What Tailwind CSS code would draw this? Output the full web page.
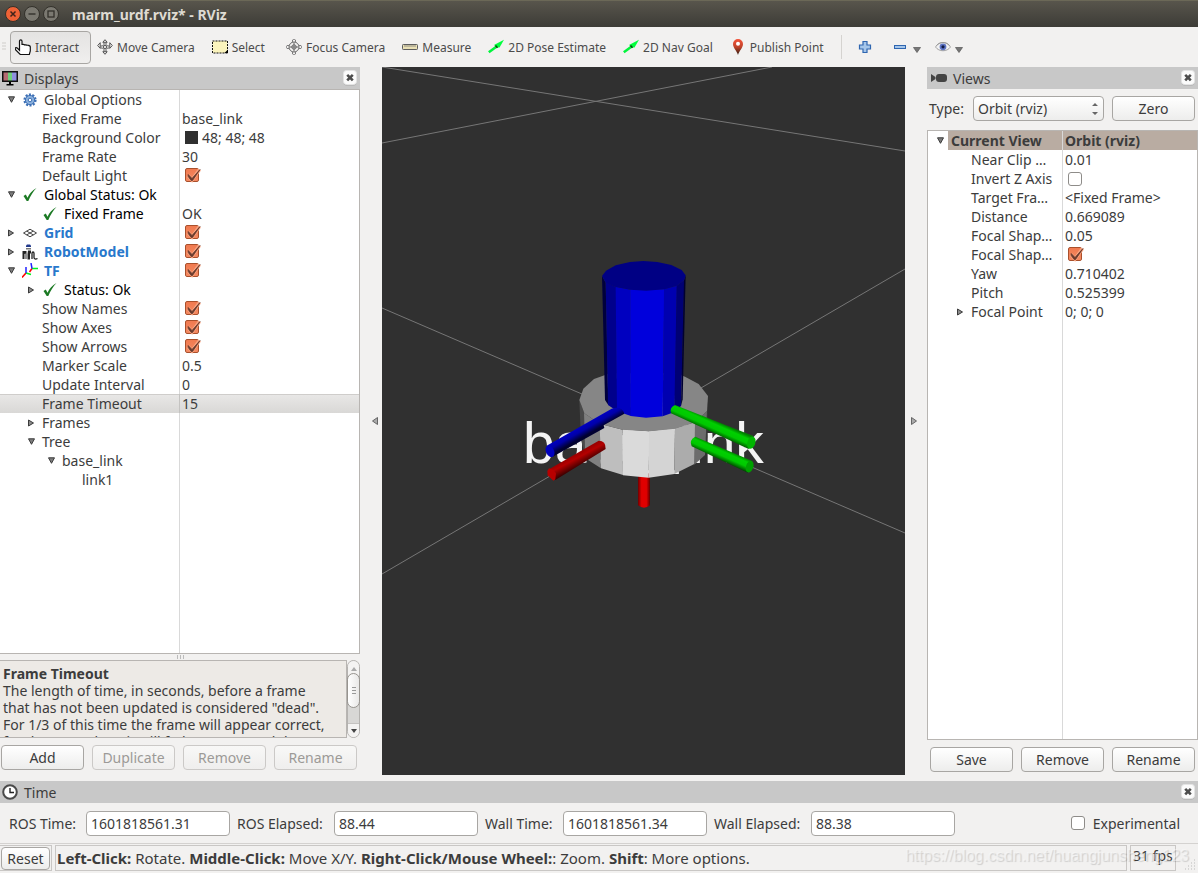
<!DOCTYPE html>
<html lang="en">
<head>
<meta charset="utf-8">
<title>marm_urdf.rviz* - RViz</title>
<script src="https://cdn.jsdelivr.net/npm/@tailwindcss/browser@4"></script>
</head>
<body class="flex h-screen flex-col overflow-hidden bg-[#f2f1f0] font-['Noto_Sans','Open_Sans',sans-serif] text-[14px] leading-[19px] text-[#3c3c3c]">

<!-- shared icons -->
<svg class="hidden" aria-hidden="true">
  <symbol id="down" viewBox="0 0 8 8"><path d="M1.500.8h6L4.500 6.300z" fill="#7c7c7c" stroke="#3a3a3a"/></symbol>
  <symbol id="right" viewBox="0 0 8 8"><path d="M1.500 1v6l5-3z" fill="#8c8c8c" stroke="#3a3a3a"/></symbol>
  <symbol id="ok" viewBox="0 0 14 14"><path d="M.5 8 2.800 6.500 4.500 9.700C6.500 5.500 9 2.500 13.500 0 10 3.500 7.500 8 5.300 13H3.700z" fill="#1c7a24"/></symbol>
  <symbol id="tick" viewBox="0 0 16 16"><path d="M3 7.500 7 12 14.500 1.500" fill="none" stroke="#f9a582" stroke-width="3.500"/><path d="M3.200 6.500 7 10.500 15 1.500 7.500 12.500H6.200L3.200 8.500z" fill="#693a2c" stroke="#693a2c" stroke-width=".8"/></symbol>
  <symbol id="close" viewBox="0 0 14 16"><rect x=".5" y="1.500" width="13" height="14" rx="3" fill="#aaa"/><rect x=".5" y=".5" width="13" height="14" rx="3" fill="#fbfbfb" stroke="#e4e4e4"/><path d="M4.200 4.800l5.600 5.600M9.800 4.800l-5.600 5.600" stroke="#4c4c4c" stroke-width="2.600"/></symbol>
  <symbol id="pose" viewBox="0 0 16 16"><path d="M.8 13.200 9 7.200" stroke="#00f53c" stroke-width="2.600"/><path d="M6 6 16 .8 11.500 8.500 9 8.500z" fill="#00ff3c"/><path d="m7.500 6.500 2 2.200" stroke="#064c12" stroke-width="1.600"/></symbol>
</svg>

<header class="flex h-[27px] shrink-0 items-center gap-[3px] border-t border-[#6b6857] bg-linear-to-b from-[#58554c] to-[#3d3c37] pl-[5px]">
  <button aria-label="Close" class="size-4"><svg viewBox="0 0 16 16"><circle cx="8" cy="8" r="7.500" fill="#ee6236" stroke="#33312b"/><path d="m5.500 5.500 5 5m0-5-5 5" stroke="#40231a" stroke-width="1.500"/></svg></button>
  <button aria-label="Minimize" class="size-4"><svg viewBox="0 0 16 16"><circle cx="8" cy="8" r="7.500" fill="#7b7971" stroke="#33312b"/><path d="M4.500 8h7" stroke="#33312b" stroke-width="1.400"/></svg></button>
  <button aria-label="Maximize" class="size-4"><svg viewBox="0 0 16 16"><circle cx="8" cy="8" r="7.500" fill="#7b7971" stroke="#33312b"/><rect x="5" y="5" width="6" height="6" fill="none" stroke="#33312b" stroke-width="1.300"/></svg></button>
  <h1 class="pl-[10px] text-[14px] font-bold text-[#dfdbd2]">marm_urdf.rviz* - RViz</h1>
</header>

<nav aria-label="Tools" class="flex h-10 shrink-0 items-center text-[12px] text-[#4c4c4c]">
  <svg class="mx-[2px] h-3 w-1.5" viewBox="0 0 6 12"><path d="M0 2h4M0 5h4M0 8h4" stroke="#cfcdca"/></svg>
  <button class="flex h-[33px] w-[81px] items-center gap-1 rounded border border-[#a8a6a3] bg-linear-to-b from-[#e4e3e2] to-[#f0efee] pl-1 whitespace-nowrap">
    <svg class="size-4 shrink-0" viewBox="0 0 16 16"><path d="M4.500 8V2.200C4.500.3 7 .3 7 2.200V6c0-1 2.700-1 2.700.4 0-1 2.600-.9 2.600.4 0-.8 3-.6 3 1V12l-1 3.500h-9L.7 11C-.5 8.800 1 8 2.500 9.300l2 2z" fill="#fff" stroke="#111" stroke-width="1.200"/></svg>Interact</button>
  <button class="flex items-center gap-1 pl-[6px] whitespace-nowrap">
    <svg class="size-4 shrink-0" viewBox="0 0 16 16" fill="none" stroke="#555"><path d="M8 .7 5.800 3.300H10.200zM8 15.300l-2.200-2.600h4.400zM.7 6.500l2.500-2.800v5.600zM15.300 6.500l-2.500-2.800v5.600zM7 3.500v2L5.500 7H3.500M9 3.500v2L10.500 7h2M7 12.500v-2L5.500 9h-2M9 12.500v-2L10.500 9h2"/><circle cx="8" cy="8" r="1.600"/></svg>Move Camera</button>
  <button class="ml-[17px] flex items-center gap-1">
    <svg class="size-4 shrink-0" viewBox="0 0 16 16"><rect x=".5" y="2" width="15" height="12" fill="#fbf4bd" stroke="#111" stroke-dasharray="2 1"/><path d="M12.500 14H16v-3.500z"/></svg>Select</button>
  <button class="ml-[21px] flex items-center gap-1 whitespace-nowrap">
    <svg class="size-4 shrink-0" viewBox="0 0 16 16" fill="none" stroke="#666"><circle cx="8" cy="8" r="5"/><circle cx="8" cy="8" r="2.200"/><path d="M8 3.500v9M3.500 8h9"/><path d="M6.500 3V1L8 0l1.500 1v2M6.500 13v2L8 16l1.500-1v-2M3 6.500H1L0 8l1 1.500h2M13 6.500h2L16 8l-1 1.500h-2" stroke-width=".8"/></svg>Focus Camera</button>
  <button class="ml-[17px] flex items-center gap-1">
    <svg class="size-4 shrink-0" viewBox="0 0 16 16"><rect x=".5" y="5.500" width="15" height="5" rx=".8" fill="#e9e0b4" stroke="#5c5c5c"/><path d="M3 6v2M5 6v2M7 6v2M9 6v2M11 6v2M13 6v2" stroke="#777" stroke-width=".8"/></svg>Measure</button>
  <button class="ml-[17px] flex items-center gap-1 whitespace-nowrap"><svg class="size-4 shrink-0"><use href="#pose"/></svg>2D Pose Estimate</button>
  <button class="ml-[17px] flex items-center gap-1 whitespace-nowrap"><svg class="size-4 shrink-0"><use href="#pose"/></svg>2D Nav Goal</button>
  <button class="ml-[17px] flex items-center gap-1 whitespace-nowrap">
    <svg class="size-4 shrink-0" viewBox="0 0 16 16"><defs><linearGradient id="pin" x2="0" y2="1"><stop stop-color="#f4543a"/><stop offset=".5" stop-color="#c0432a"/><stop offset="1" stop-color="#2c1a10"/></linearGradient></defs><path d="M8 16C7 12 3 9 3 5a5 5 0 0 1 10 0c0 4-4 7-5 11z" fill="url(#pin)"/><circle cx="8" cy="4.700" r="2" fill="#fff"/></svg>Publish Point</button>
  <span class="ml-[17px] h-6 w-px bg-[#d5d3d0]"></span>
  <button aria-label="Add tool" class="ml-[16px] size-[14px]"><svg viewBox="0 0 14 14"><path d="M5 1.500h4V5h3.500v4H9v3.500H5V9H1.500V5H5z" fill="#a5c6ea" stroke="#2f66b0" stroke-width="1.200"/></svg></button>
  <button aria-label="Remove tool" class="ml-[21px] flex items-center gap-[6px]"><svg class="size-[14px]" viewBox="0 0 14 14"><rect x="1.500" y="5.500" width="11" height="3" fill="#a5c6ea" stroke="#2f66b0"/></svg><svg class="mt-1.5 h-[6px] w-2" viewBox="0 0 8 6"><path d="M.5.5h7L4 5.500z" fill="#777" stroke="#555" stroke-width=".7"/></svg></button>
  <button aria-label="Tool names" class="ml-[14px] flex items-center gap-1"><svg class="size-4" viewBox="0 0 16 16"><path d="M.5 8C4 2 12 2 15.500 8 12 13 4 13 .5 8z" fill="#f2f2f2" stroke="#a4a4a4"/><path d="M1.500 6.500C5 2.500 11 2.500 14.500 6.500" fill="none" stroke="#999"/><circle cx="8" cy="7.800" r="3.400" fill="#5d74c4"/><circle cx="8" cy="7.800" r="1.600" fill="#111a44"/></svg><svg class="mt-1.5 h-[6px] w-2" viewBox="0 0 8 6"><path d="M.5.5h7L4 5.500z" fill="#777" stroke="#555" stroke-width=".7"/></svg></button>
</nav>

<main class="flex min-h-0 flex-1">
  <!-- Displays -->
  <section class="flex w-[360px] shrink-0 flex-col pb-[11px]">
    <div class="flex h-[22px] shrink-0 items-center bg-[#c8c8c8] px-[2px]">
      <svg class="size-4" viewBox="0 0 16 16"><rect x=".5" y="1.500" width="15" height="10" fill="#111" stroke="#111"/><path d="M1.500 2.500H6v8H1.500z" fill="#b56a72"/><path d="M6 2.500h4v8H6z" fill="#6fd07c"/><path d="M10 2.500h4.500v8H10z" fill="#8f8fe0"/><path d="M7 12h2v2h2.500v1.500h-7V14H7z"/></svg>
      <h2 class="flex-1 pl-[6px]">Displays</h2>
      <button aria-label="Close Displays" class="mr-px h-4 w-[14px]"><svg class="h-4 w-[14px]"><use href="#close"/></svg></button>
    </div>
    <div class="min-h-0 flex-1 border-y border-r border-[#b8b5b2] bg-white">
      <table class="h-full w-full table-fixed border-separate border-spacing-0 whitespace-nowrap">
        <colgroup><col class="w-[180px]"><col></colgroup>
        <tbody>
        <tr class="h-[19px]"><td class="border-r border-[#d9d9d9] p-0"><div class="flex items-center pl-[7px]"><svg class="mr-2 size-2"><use href="#down"/></svg><svg class="mr-[7px] size-[14px]" viewBox="0 0 14 14"><circle cx="7" cy="7" r="5.400" fill="none" stroke="#3c6fb5" stroke-width="2.400" stroke-dasharray="2 1.390"/><circle cx="7" cy="7" r="4.600" fill="#8ab0dc" stroke="#3c6fb5"/><circle cx="7" cy="7" r="1.800" fill="#fff" stroke="#3c6fb5"/></svg>Global Options</div></td><td class="p-0"></td></tr>
        <tr class="h-[19px]"><td class="border-r border-[#d9d9d9] p-0 pl-[42px]">Fixed Frame</td><td class="p-0 pl-[2px]">base_link</td></tr>
        <tr class="h-[19px]"><td class="border-r border-[#d9d9d9] p-0 pl-[42px]">Background Color</td><td class="p-0"><div class="flex items-center gap-1 pl-[5px]"><span class="size-[13px] bg-[#303030]"></span>48; 48; 48</div></td></tr>
        <tr class="h-[19px]"><td class="border-r border-[#d9d9d9] p-0 pl-[42px]">Frame Rate</td><td class="p-0 pl-[2px]">30</td></tr>
        <tr class="h-[19px]"><td class="border-r border-[#d9d9d9] p-0 pl-[42px]"><label for="c1">Default Light</label></td><td class="p-0"><div class="grid pl-[5px]"><input id="c1" type="checkbox" checked class="col-start-1 row-start-1 size-[14px] appearance-none rounded-[2px] border border-[#a9502c] bg-linear-to-b from-[#f07a50] to-[#f58a62]"><svg class="pointer-events-none col-start-1 row-start-1 size-4"><use href="#tick"/></svg></div></td></tr>
        <tr class="h-[19px] text-black"><td class="border-r border-[#d9d9d9] p-0"><div class="flex items-center pl-[7px]"><svg class="mr-2 size-2"><use href="#down"/></svg><svg class="mr-[7px] size-[14px]"><use href="#ok"/></svg>Global Status: Ok</div></td><td class="p-0"></td></tr>
        <tr class="h-[19px]"><td class="border-r border-[#d9d9d9] p-0 text-black"><div class="flex items-center pl-[43px]"><svg class="mr-[7px] size-[14px]"><use href="#ok"/></svg>Fixed Frame</div></td><td class="p-0 pl-[2px]">OK</td></tr>
        <tr class="h-[19px]"><td class="border-r border-[#d9d9d9] p-0"><div class="flex items-center pl-[7px]"><svg class="mr-2 size-2"><use href="#right"/></svg><svg class="mr-[7px] size-[14px]" viewBox="0 0 14 14" fill="none" stroke="#444"><path d="M.5 7 7 3.200 13.500 7 7 10.800zM3.700 5.100l6.600 3.800M10.300 5.100 3.700 8.900"/></svg><label for="c2" class="font-bold text-[#2878cc]">Grid</label></div></td><td class="p-0"><div class="grid pl-[5px]"><input id="c2" type="checkbox" checked class="col-start-1 row-start-1 size-[14px] appearance-none rounded-[2px] border border-[#a9502c] bg-linear-to-b from-[#f07a50] to-[#f58a62]"><svg class="pointer-events-none col-start-1 row-start-1 size-4"><use href="#tick"/></svg></div></td></tr>
        <tr class="h-[19px]"><td class="border-r border-[#d9d9d9] p-0"><div class="flex items-center pl-[7px]"><svg class="mr-[7px] size-2"><use href="#right"/></svg><svg class="mr-[6px] size-4" viewBox="0 0 16 16"><path d="M4 1.500 5 .5h3l1 1V3H4z" fill="#223a8c"/><path d="M4 4h5v1.500H4z" fill="#777"/><path d="M.5 7h4v8h-1V9.500l-1 .5v5h-2zM6 6.500h3V9l-1 1v5.500H5.500V10z" fill="#222"/><path d="M10 15V9.500c0-2 2-2 2 0v4c0 1.500 1.500 2 3.500 1" fill="none" stroke="#222" stroke-width="1.300"/></svg><label for="c3" class="font-bold text-[#2878cc]">RobotModel</label></div></td><td class="p-0"><div class="grid pl-[5px]"><input id="c3" type="checkbox" checked class="col-start-1 row-start-1 size-[14px] appearance-none rounded-[2px] border border-[#a9502c] bg-linear-to-b from-[#f07a50] to-[#f58a62]"><svg class="pointer-events-none col-start-1 row-start-1 size-4"><use href="#tick"/></svg></div></td></tr>
        <tr class="h-[19px]"><td class="border-r border-[#d9d9d9] p-0"><div class="flex items-center pl-[7px]"><svg class="mr-[7px] size-2"><use href="#down"/></svg><svg class="mr-[6px] size-4" viewBox="0 0 16 16" fill="none" stroke-width="1.500"><path d="M4 10 0 14.500M10 5.500 7.500 9" stroke="#f00"/><path d="M4 10l5 1.500M10 5.500h6" stroke="#0e2"/><path d="M4 10V4M10 5.500 9 0" stroke="#22f"/></svg><label for="c4" class="font-bold text-[#2878cc]">TF</label></div></td><td class="p-0"><div class="grid pl-[5px]"><input id="c4" type="checkbox" checked class="col-start-1 row-start-1 size-[14px] appearance-none rounded-[2px] border border-[#a9502c] bg-linear-to-b from-[#f07a50] to-[#f58a62]"><svg class="pointer-events-none col-start-1 row-start-1 size-4"><use href="#tick"/></svg></div></td></tr>
        <tr class="h-[19px] text-black"><td class="border-r border-[#d9d9d9] p-0"><div class="flex items-center pl-[27px]"><svg class="mr-2 size-2"><use href="#right"/></svg><svg class="mr-[7px] size-[14px]"><use href="#ok"/></svg>Status: Ok</div></td><td class="p-0"></td></tr>
        <tr class="h-[19px]"><td class="border-r border-[#d9d9d9] p-0 pl-[42px]"><label for="c5">Show Names</label></td><td class="p-0"><div class="grid pl-[5px]"><input id="c5" type="checkbox" checked class="col-start-1 row-start-1 size-[14px] appearance-none rounded-[2px] border border-[#a9502c] bg-linear-to-b from-[#f07a50] to-[#f58a62]"><svg class="pointer-events-none col-start-1 row-start-1 size-4"><use href="#tick"/></svg></div></td></tr>
        <tr class="h-[19px]"><td class="border-r border-[#d9d9d9] p-0 pl-[42px]"><label for="c6">Show Axes</label></td><td class="p-0"><div class="grid pl-[5px]"><input id="c6" type="checkbox" checked class="col-start-1 row-start-1 size-[14px] appearance-none rounded-[2px] border border-[#a9502c] bg-linear-to-b from-[#f07a50] to-[#f58a62]"><svg class="pointer-events-none col-start-1 row-start-1 size-4"><use href="#tick"/></svg></div></td></tr>
        <tr class="h-[19px]"><td class="border-r border-[#d9d9d9] p-0 pl-[42px]"><label for="c7">Show Arrows</label></td><td class="p-0"><div class="grid pl-[5px]"><input id="c7" type="checkbox" checked class="col-start-1 row-start-1 size-[14px] appearance-none rounded-[2px] border border-[#a9502c] bg-linear-to-b from-[#f07a50] to-[#f58a62]"><svg class="pointer-events-none col-start-1 row-start-1 size-4"><use href="#tick"/></svg></div></td></tr>
        <tr class="h-[19px]"><td class="border-r border-[#d9d9d9] p-0 pl-[42px]">Marker Scale</td><td class="p-0 pl-[2px]">0.5</td></tr>
        <tr class="h-[19px]"><td class="border-r border-[#d9d9d9] p-0 pl-[42px]">Update Interval</td><td class="p-0 pl-[2px]">0</td></tr>
        <tr class="h-[19px] bg-linear-to-b from-[#e9e8e7] to-[#d9d8d6] shadow-[inset_0_1px_0_#cfcdcb]"><td class="border-r border-[#c4c3c1] p-0 pl-[42px]">Frame Timeout</td><td class="p-0 pl-[2px]">15</td></tr>
        <tr class="h-[19px]"><td class="border-r border-[#d9d9d9] p-0"><div class="flex items-center pl-[27px]"><svg class="mr-[7px] size-2"><use href="#right"/></svg>Frames</div></td><td class="p-0"></td></tr>
        <tr class="h-[19px]"><td class="border-r border-[#d9d9d9] p-0"><div class="flex items-center pl-[27px]"><svg class="mr-[7px] size-2"><use href="#down"/></svg>Tree</div></td><td class="p-0"></td></tr>
        <tr class="h-[19px]"><td class="border-r border-[#d9d9d9] p-0"><div class="flex items-center pl-[47px]"><svg class="mr-[7px] size-2"><use href="#down"/></svg>base_link</div></td><td class="p-0"></td></tr>
        <tr class="h-[19px]"><td class="border-r border-[#d9d9d9] p-0 pl-[82px]">link1</td><td class="p-0"></td></tr>
        <tr><td class="border-r border-[#d9d9d9] p-0"></td><td class="p-0"></td></tr>
        </tbody>
      </table>
    </div>
    <div class="flex h-[6px] shrink-0 items-center justify-center gap-[2px]"><span class="h-1 w-px bg-[#bbb]"></span><span class="h-1 w-px bg-[#bbb]"></span><span class="h-1 w-px bg-[#bbb]"></span></div>
    <div class="flex h-[78px] shrink-0">
      <div id="help" class="min-w-0 flex-1 overflow-hidden border border-l-0 border-[#b8b5b2] bg-[#edeae6] pt-1 pl-[3px] leading-[17px] whitespace-nowrap">
        <h3 class="font-bold">Frame Timeout</h3>
        <p>The length of time, in seconds, before a frame<br>that has not been updated is considered "dead".<br>For 1/3 of this time the frame will appear correct,<br>for the second 1/3 it will fade to gray, and then</p>
      </div>
      <div role="scrollbar" aria-controls="help" aria-valuenow="0" class="flex w-[13px] flex-col items-center rounded-full border border-[#b4b2af] bg-[#d8d7d5]">
        <span class="flex h-4 w-full items-center justify-center rounded-t-full bg-[#f4f3f2]"><svg class="h-1 w-[6px]" viewBox="0 0 6 4"><path d="m0 4 3-4 3 4z" fill="#aaa"/></svg></span>
        <span class="-mx-px -mt-1 flex h-[35px] w-[13px] flex-col items-center justify-center gap-[2px] rounded-full border border-[#97948f] bg-linear-to-r from-white to-[#e9e8e7]"><i class="h-px w-1 bg-[#999]"></i><i class="h-px w-1 bg-[#999]"></i><i class="h-px w-1 bg-[#999]"></i></span>
        <span class="mt-auto flex h-[14px] w-full items-center justify-center rounded-b-full border-t border-[#c4c2c0] bg-[#f4f3f2]"><svg class="h-1 w-[6px]" viewBox="0 0 6 4"><path d="m0 0 3 4 3-4z" fill="#444"/></svg></span>
      </div>
    </div>
    <div class="mt-[7px] grid grid-cols-4 gap-2 pr-[3px] pl-px">
      <button class="h-[25px] rounded border border-[#a8a6a3] bg-linear-to-b from-white to-[#ededec]">Add</button>
      <button disabled class="h-[25px] rounded border border-[#cbc9c7] bg-linear-to-b from-[#f8f8f7] to-[#efeeed] text-[#9c9a97]">Duplicate</button>
      <button disabled class="h-[25px] rounded border border-[#cbc9c7] bg-linear-to-b from-[#f8f8f7] to-[#efeeed] text-[#9c9a97]">Remove</button>
      <button disabled class="h-[25px] rounded border border-[#cbc9c7] bg-linear-to-b from-[#f8f8f7] to-[#efeeed] text-[#9c9a97]">Rename</button>
    </div>
  </section>

  <button aria-label="Hide left dock" class="mb-1.5 flex w-[22px] shrink-0 items-center justify-end pr-1"><svg class="h-2 w-[6px]" viewBox="0 0 6 8"><path d="M5.500.5v7L.5 4z" fill="#aaa" stroke="#666"/></svg></button>

  <!-- 3D view -->
  <div class="mb-1.5 min-w-0 flex-1 bg-[#303030]">
    <svg class="h-full w-full" viewBox="382 67 523 708" preserveAspectRatio="xMidYMid slice" role="img" aria-label="Robot model">
      <defs>
        <linearGradient id="gb" gradientUnits="userSpaceOnUse" x1="233" y1="549" x2="255" y2="588"><stop stop-color="#000070"/><stop offset=".3" stop-color="#0000c0"/><stop offset=".6" stop-color="#0000a8"/><stop offset="1" stop-color="#000030"/></linearGradient>
        <linearGradient id="gr" gradientUnits="userSpaceOnUse" x1="222" y1="640" x2="242" y2="677"><stop stop-color="#900000"/><stop offset=".4" stop-color="#b40000"/><stop offset="1" stop-color="#3c0000"/></linearGradient>
        <linearGradient id="gg" gradientUnits="userSpaceOnUse" x1="648" y1="543" x2="632" y2="579"><stop stop-color="#008000"/><stop offset=".25" stop-color="#00d000"/><stop offset=".6" stop-color="#00c800"/><stop offset="1" stop-color="#004800"/></linearGradient>
        <linearGradient id="gg2" gradientUnits="userSpaceOnUse" x1="673" y1="626" x2="658" y2="660"><stop stop-color="#008000"/><stop offset=".25" stop-color="#00d000"/><stop offset=".6" stop-color="#00c800"/><stop offset="1" stop-color="#004800"/></linearGradient>
        <linearGradient id="gv"><stop stop-color="#700000"/><stop offset=".3" stop-color="#e00000"/><stop offset=".7" stop-color="#e00000"/><stop offset="1" stop-color="#600000"/></linearGradient>
      </defs>
      <path d="M382 67 905 151M382 143 772 67M382 308 905 533M382 574 905 269" stroke="#767676" fill="none"/>
      <text x="523" y="463" font-family="Liberation Sans, sans-serif" font-size="57" fill="#f4f4f4">base_link</text>
      <g transform="translate(500 240) scale(.33333)">
        <path d="M414 700h36v96q-18 14-36 0z" fill="url(#gv)"/>
        <path d="M238 480 253 520 258 655 243 600z" fill="#4a4a4a"/>
        <path d="M624 468 621 513 615 640 622 590z" fill="#3a3a3a"/>
        <path d="M252 519 300 552 303 685 256 655z" fill="#808080"/>
        <path d="M299 551 368 569 369 705 303 685z" fill="#bebebe"/>
        <path d="M368 568 448 574 446 713 369 706z" fill="#dadada"/>
        <path d="M447 573 525 565 523 702 446 713z" fill="#d4d4d4"/>
        <path d="M525 565 586 546 583 672 523 702z" fill="#acacac"/>
        <path d="M585 547 621 513 615 645 583 674z" fill="#6c6c6c"/>
        <path d="M238 480 250 446 282 417 330 400H530L555 410 596 432 624 468 621 513 585 547 525 566 448 574 368 569 300 552 253 520z" fill="#868686"/>
        <path d="M306 108 317 128 325 495 315 480z" fill="#00003c"/>
        <path d="M317 127 348 141 352 514 324 495z" fill="#00008c"/>
        <path d="M347 140 392 149 393 528 351 514z" fill="#0000c0"/>
        <path d="M391 148 493 148 488 529 438 533 392 528z" fill="#0000dc"/>
        <path d="M492 147 531 137 524 516 488 529z" fill="#0000b0"/>
        <path d="M530 137 553 120 543 498 523 516z" fill="#000074"/>
        <path d="M552 120 557 106 548 478 543 498z" fill="#000030"/>
        <path d="M306 108 318 92 347 76 390 66 430 63 472 66 514 75 545 90 557 106 553 120 531 137 493 148 439 152 391 149 347 141 317 128z" fill="#000084"/>
        <path d="M140 617 335 506Q365 496 373 521L311 556 313 564 158 650z" fill="url(#gb)"/>
        <ellipse cx="150" cy="634" rx="12" ry="18" transform="rotate(-28 150 634)" fill="#0000be"/>
        <path d="M147 688 296 602Q318 602 317 627L166 720z" fill="url(#gr)"/>
        <path d="M147 685 160 690 168 700 166 718 160 722 143 706 142 693z" fill="#b80000"/>
        <path d="M525 495 760 588 746 627 513 520Q508 502 525 495z" fill="url(#gg)"/>
        <ellipse cx="754" cy="608" rx="12" ry="19" transform="rotate(18 754 608)" fill="#00b400"/>
        <path d="M586 590 757 663 743 698 575 619Q566 600 586 590z" fill="url(#gg2)"/>
        <ellipse cx="749" cy="680" rx="11" ry="18" transform="rotate(18 749 680)" fill="#00a000"/>
      </g>
    </svg>
  </div>

  <button aria-label="Hide right dock" class="mb-1.5 flex w-[22px] shrink-0 items-center justify-start pl-1.5"><svg class="h-2 w-[6px]" viewBox="0 0 6 8"><path d="M.5.5v7l5-3.500z" fill="#aaa" stroke="#666"/></svg></button>

  <!-- Views -->
  <section class="flex w-[271px] shrink-0 flex-col pb-[9px]">
    <div class="flex h-[22px] shrink-0 items-center bg-[#c8c8c8] px-1">
      <svg class="size-4" viewBox="0 0 16 16"><path d="M0 4v8l4.500-3V7z" fill="#444"/><rect x="5" y="4" width="11" height="8" rx="3" fill="#444"/></svg>
      <h2 class="flex-1 pl-[6px]">Views</h2>
      <button aria-label="Close Views" class="-mr-px h-4 w-[14px]"><svg class="h-4 w-[14px]"><use href="#close"/></svg></button>
    </div>
    <div class="flex h-[41px] shrink-0 items-center pr-[3px] pb-[2px] pl-[2px]">
      <label for="type" class="w-[44px]">Type:</label>
      <div class="grid w-[131px] items-center">
        <select id="type" class="col-start-1 row-start-1 h-[25px] appearance-none rounded border border-[#a8a6a3] bg-linear-to-b from-white to-[#ededec] pl-1"><option>Orbit (rviz)</option></select>
        <svg class="pointer-events-none col-start-1 row-start-1 mr-1.5 h-3 w-[6px] justify-self-end" viewBox="0 0 6 12"><path d="m0 3 3-3 3 3zM0 9l3 3 3-3z" fill="#666"/></svg>
      </div>
      <button class="ml-2 h-[25px] flex-1 rounded border border-[#a8a6a3] bg-linear-to-b from-white to-[#ededec]">Zero</button>
    </div>
    <div class="min-h-0 flex-1 border border-[#b8b5b2] bg-white">
      <table class="h-full w-full table-fixed border-separate border-spacing-0 whitespace-nowrap">
        <colgroup><col class="w-[135px]"><col></colgroup>
        <tbody>
        <tr class="h-[19px] font-bold"><td class="border-r border-[#d9d9d9] p-0"><div class="flex items-center pl-2"><svg class="mr-1 size-2"><use href="#down"/></svg><span class="flex-1 bg-[#b9aca2] pl-[3px]">Current View</span></div></td><td class="bg-[#b9aca2] p-0 pl-[2px]">Orbit (rviz)</td></tr>
        <tr class="h-[19px]"><td class="border-r border-[#d9d9d9] p-0 pl-[43px]">Near Clip …</td><td class="p-0 pl-[2px]">0.01</td></tr>
        <tr class="h-[19px]"><td class="border-r border-[#d9d9d9] p-0 pl-[43px]"><label for="c8">Invert Z Axis</label></td><td class="p-0"><div class="grid pl-[5px]"><input id="c8" type="checkbox" class="size-[14px] appearance-none rounded-[3px] border border-[#8e8c89] bg-white"></div></td></tr>
        <tr class="h-[19px]"><td class="border-r border-[#d9d9d9] p-0 pl-[43px]">Target Fra…</td><td class="p-0 pl-[2px]">&lt;Fixed Frame&gt;</td></tr>
        <tr class="h-[19px]"><td class="border-r border-[#d9d9d9] p-0 pl-[43px]">Distance</td><td class="p-0 pl-[2px]">0.669089</td></tr>
        <tr class="h-[19px]"><td class="border-r border-[#d9d9d9] p-0 pl-[43px]">Focal Shap…</td><td class="p-0 pl-[2px]">0.05</td></tr>
        <tr class="h-[19px]"><td class="border-r border-[#d9d9d9] p-0 pl-[43px]"><label for="c9">Focal Shap…</label></td><td class="p-0"><div class="grid pl-[5px]"><input id="c9" type="checkbox" checked class="col-start-1 row-start-1 size-[14px] appearance-none rounded-[2px] border border-[#a9502c] bg-linear-to-b from-[#f07a50] to-[#f58a62]"><svg class="pointer-events-none col-start-1 row-start-1 size-4"><use href="#tick"/></svg></div></td></tr>
        <tr class="h-[19px]"><td class="border-r border-[#d9d9d9] p-0 pl-[43px]">Yaw</td><td class="p-0 pl-[2px]">0.710402</td></tr>
        <tr class="h-[19px]"><td class="border-r border-[#d9d9d9] p-0 pl-[43px]">Pitch</td><td class="p-0 pl-[2px]">0.525399</td></tr>
        <tr class="h-[19px]"><td class="border-r border-[#d9d9d9] p-0"><div class="flex items-center pl-7"><svg class="mr-[7px] size-2"><use href="#right"/></svg>Focal Point</div></td><td class="p-0 pl-[2px]">0; 0; 0</td></tr>
        <tr><td class="border-r border-[#d9d9d9] p-0"></td><td class="p-0"></td></tr>
        </tbody>
      </table>
    </div>
    <div class="mt-[7px] grid grid-cols-3 gap-2 px-[3px]">
      <button class="h-[25px] rounded border border-[#a8a6a3] bg-linear-to-b from-white to-[#ededec]">Save</button>
      <button class="h-[25px] rounded border border-[#a8a6a3] bg-linear-to-b from-white to-[#ededec]">Remove</button>
      <button class="h-[25px] rounded border border-[#a8a6a3] bg-linear-to-b from-white to-[#ededec]">Rename</button>
    </div>
  </section>
</main>

<!-- Time -->
<section class="shrink-0">
  <div class="flex h-[22px] items-center bg-[#c8c8c8] pr-[3px] pl-[2px]">
    <svg class="size-4" viewBox="0 0 16 16"><circle cx="8" cy="8" r="6.800" fill="#fff" stroke="#4a4a4a" stroke-width="2"/><path d="M8 4v4.500h4" fill="none" stroke="#222" stroke-width="1.400"/></svg>
    <h2 class="flex-1 pl-[6px]">Time</h2>
    <button aria-label="Close Time" class="h-4 w-[14px]"><svg class="h-4 w-[14px]"><use href="#close"/></svg></button>
  </div>
  <div class="flex h-10 items-center pr-[18px] pl-[9px] whitespace-nowrap">
    <label for="t1" class="w-[77px]">ROS Time:</label><input id="t1" value="1601818561.31" class="h-[25px] w-[144px] rounded border border-[#a8a6a3] bg-white px-1">
    <label for="t2" class="ml-[7px] w-[97px]">ROS Elapsed:</label><input id="t2" value="88.44" class="h-[25px] w-[144px] rounded border border-[#a8a6a3] bg-white px-1">
    <label for="t3" class="ml-[7px] w-[78px]">Wall Time:</label><input id="t3" value="1601818561.34" class="h-[25px] w-[144px] rounded border border-[#a8a6a3] bg-white px-1">
    <label for="t4" class="ml-[7px] w-[97px]">Wall Elapsed:</label><input id="t4" value="88.38" class="h-[25px] w-[144px] rounded border border-[#a8a6a3] bg-white px-1">
    <input id="exp" type="checkbox" class="ml-auto size-[14px] appearance-none rounded-[3px] border border-[#8e8c89] bg-white"><label for="exp" class="pl-2">Experimental</label>
  </div>
</section>

<footer class="relative flex h-[30px] shrink-0 items-stretch gap-[3px] border-t border-[#d4d2d0] pt-px pb-[2px]">
  <div class="flex items-center border border-l-0 border-[#c9c7c5] px-px"><button class="h-[23px] w-[49px] rounded border border-[#a8a6a3] bg-linear-to-b from-white to-[#ededec]">Reset</button></div>
  <p class="min-w-0 flex-1 border border-[#c9c7c5] pt-[3px] pl-px text-[15px] whitespace-nowrap"><b>Left-Click:</b> Rotate. <b>Middle-Click:</b> Move X/Y. <b>Right-Click/Mouse Wheel:</b>: Zoom. <b>Shift</b>: More options.</p>
  <output class="mr-[22px] w-[46px] border border-[#c9c7c5] pl-[2px] whitespace-nowrap">31 fps</output>
  <svg class="absolute right-0.5 bottom-0.5 size-3" viewBox="0 0 12 12"><path d="M10 1h1M7 4h1M10 4h1M4 7h1M7 7h1M10 7h1M1 10h1M4 10h1M7 10h1M10 10h1" stroke="#bbb"/></svg>
  <span class="absolute top-[2px] right-[9px] font-['Liberation_Sans',sans-serif] text-[16px] text-white/40 [text-shadow:1px_1px_1px_#00000026]">https://blog.csdn.net/huangjunsheng123</span>
</footer>
</body>
</html>
